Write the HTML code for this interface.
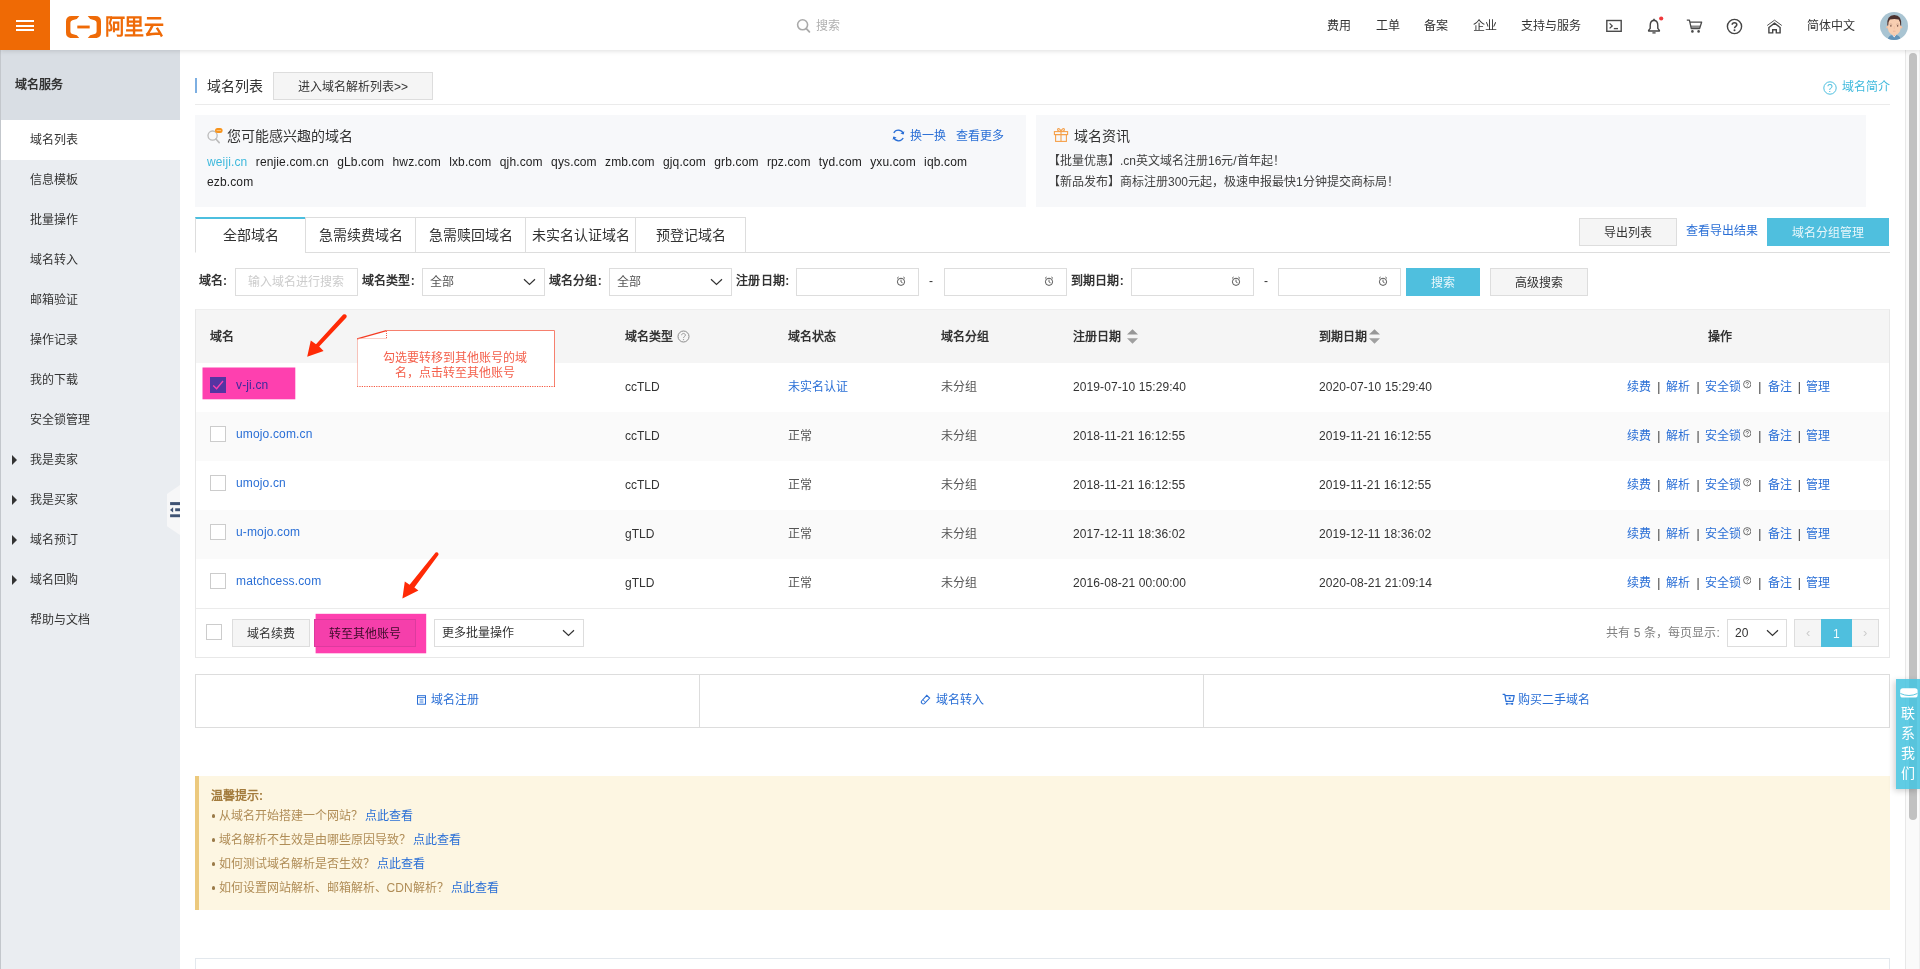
<!DOCTYPE html>
<html lang="zh-CN">
<head>
<meta charset="utf-8">
<title>域名列表</title>
<style>
*{box-sizing:border-box;margin:0;padding:0}
html,body{width:1920px;height:969px;overflow:hidden;background:#fff}
body{will-change:transform;font-family:"Liberation Sans",sans-serif;font-size:12px;color:#333;position:relative}
a{text-decoration:none;color:#2a6fd6}
.abs{position:absolute}
.t{position:absolute;white-space:nowrap;line-height:20px;height:20px}
.b{font-weight:bold}
/* header */
#hd{position:absolute;left:0;top:0;width:1920px;height:50px;background:#fff;box-shadow:0 1px 5px rgba(0,0,0,.13);z-index:20}
#burger{position:absolute;left:0;top:0;width:50px;height:50px;background:#ef6a05}
#burger i{position:absolute;left:16px;width:18px;height:2px;background:#fff}
.nav{position:absolute;top:15.5px;height:20px;line-height:20px;font-size:12px;color:#333;white-space:nowrap}
/* sidebar */
#sb{position:absolute;left:0;top:50px;width:180px;height:919px;background:#eaedf1;border-left:1px solid #c3c7cc}
#sbt{position:absolute;left:0;top:0;width:179px;height:70px;background:#d9dee4}
.si{position:absolute;left:0;width:179px;height:40px;line-height:40px;padding-left:29px;font-size:12px;color:#333}
.si.on{background:#fff}
.si .ar{position:absolute;left:11px;top:15px;width:0;height:0;border-left:5px solid #333;border-top:5px solid transparent;border-bottom:5px solid transparent}
/* common widgets */
.btn{position:absolute;height:28px;line-height:28px;border:1px solid #ddd;background:#f5f5f5;color:#333;text-align:center;font-size:12px;white-space:nowrap}
.btn.pri{background:#4fbfde;border-color:#4fbfde;color:rgba(255,255,255,.88)}
.inp{position:absolute;height:28px;border:1px solid #ddd;background:#fff;line-height:26px;font-size:12px;color:#555;white-space:nowrap}
.cb{position:absolute;width:16px;height:16px;border:1px solid #ccc;background:#fff}

/* main */
.pan{position:absolute;top:115px;height:91.5px;background:#f7f8fa}
.dl{position:absolute;left:12px;top:37px;width:800px;line-height:20px;font-size:12px;color:#222;letter-spacing:.135px}
.dl span{display:inline-block;margin-right:8.33px}
.tab{position:absolute;top:217px;height:36px;width:111px;border:1px solid #ddd;background:#fff;font-size:14px;line-height:35px;text-align:center;color:#333}
.tab.on{border-top:2px solid #4cbfdf;border-bottom:1px solid #fff;line-height:33px}
.lb{position:absolute;top:271px;height:20px;line-height:20px;font-weight:bold;font-size:12px;color:#333;white-space:nowrap;letter-spacing:.3px;margin-left:-.5px}
.chev{position:absolute;top:9px;width:13px;height:8px}
.clk{position:absolute;top:6.6px;width:10px;height:11px}

/* table */
#tb{position:absolute;left:195px;top:309px;width:1695px;height:349px;border:1px solid #e8e8e8;border-top-color:#eee}
.th{position:absolute;top:17px;height:20px;line-height:20px;font-weight:bold;font-size:12px;color:#333;white-space:nowrap}
.row{position:absolute;left:0;width:1693px;height:49px}
.row.g{background:#fafafa}
.row div,.row a{position:absolute;top:14px;height:20px;line-height:20px;white-space:nowrap;font-size:12px}
.row .c1{left:429px;color:#333}.row .c2{left:592px;color:#555}.row .c3{left:745px;color:#555}.row .c4{left:877px;color:#333;letter-spacing:.09px}.row .c5{left:1123px;color:#333;letter-spacing:.09px}
.row .dn{left:40px;top:12px;letter-spacing:.15px}
.row .cb{left:14px;top:14px;height:16px}
.row .op{left:1431.2px;color:#333}
.op a{position:static}
.op i{font-style:normal;display:inline-block;width:14.3px;text-align:center;color:#333}
.op svg{position:relative;top:-2.5px;margin-left:1.5px;margin-right:0}
.srt{position:absolute;top:18.5px;width:11px;height:15px}

/* bottom */
.tip{position:absolute;left:16px;height:20px;line-height:20px;white-space:nowrap;color:#b08d57;font-size:12px}
.tip a{margin-left:2.8px}
.tip u{display:inline-block;width:3.4px;height:3.4px;border-radius:50%;background:#9a7a48;vertical-align:middle;margin:-2px 3.6px 0 .6px}
</style>
</head>
<body>
<!-- HEADER -->
<div id="hd">
  <div id="burger"><i style="top:20px"></i><i style="top:24.5px"></i><i style="top:29px"></i></div>
  <svg class="abs" style="left:66px;top:15.7px" width="35" height="22.1" viewBox="0 0 35 22.4" preserveAspectRatio="none">
    <path d="M13.3 0 H5.6 Q0 0 0 5.6 V16.8 Q0 22.4 5.6 22.4 H13.3 L10.8 19.4 L6.4 18.2 Q4.4 17.6 4.4 15.6 V6.8 Q4.4 4.8 6.4 4.2 L10.8 3 Z" fill="#ef6a07"/>
    <path d="M21.7 0 H29.4 Q35 0 35 5.6 V16.8 Q35 22.4 29.4 22.4 H21.7 L24.2 19.4 L28.6 18.2 Q30.6 17.6 30.6 15.6 V6.8 Q30.6 4.8 28.6 4.2 L24.2 3 Z" fill="#ef6a07"/>
    <rect x="11.3" y="9.7" width="12.4" height="2.9" fill="#ef6a07"/>
  </svg>
  <div class="abs b" style="left:105px;top:13.5px;font-size:20px;line-height:26px;height:26px;color:#ef6a07;letter-spacing:-.55px;white-space:nowrap;transform:scaleY(1.06);transform-origin:50% 50%">阿里云</div>
  <!-- search -->
  <svg class="abs" style="left:796px;top:18px" width="16" height="16" viewBox="0 0 16 16"><circle cx="6.6" cy="6.8" r="5" fill="none" stroke="#aaa" stroke-width="1.6"/><path d="M10.3 10.6 L13.4 13.8" stroke="#aaa" stroke-width="1.8" stroke-linecap="round"/></svg>
  <div class="nav" style="left:816px;color:#b0b0b0">搜索</div>
  <div class="nav" style="left:1327px">费用</div>
  <div class="nav" style="left:1375.5px">工单</div>
  <div class="nav" style="left:1424px">备案</div>
  <div class="nav" style="left:1472.5px">企业</div>
  <div class="nav" style="left:1521px">支持与服务</div>
  <!-- terminal -->
  <svg class="abs" style="left:1606px;top:19px" width="16" height="14" viewBox="0 0 16 14"><rect x=".8" y="1.5" width="14.4" height="10.8" fill="none" stroke="#4a4a4a" stroke-width="1.4"/><path d="M3.6 4.4 L6.2 6.9 L3.6 9.4" fill="none" stroke="#4a4a4a" stroke-width="1.3"/><path d="M7.8 9.6 H12" stroke="#4a4a4a" stroke-width="1.3"/></svg>
  <!-- bell -->
  <svg class="abs" style="left:1646px;top:16.6px;overflow:visible" width="18" height="18" viewBox="0 0 18 18"><path d="M8 3.2 C5.2 3.6 4.2 6 4.2 8.4 V11.4 L2.6 13.4 V14 H13.4 V13.4 L11.8 11.4 V8.4 C11.8 6 10.8 3.6 8 3.2 Z" fill="none" stroke="#444" stroke-width="1.4" stroke-linejoin="round"/><path d="M8 1.8 V3" stroke="#444" stroke-width="1.5"/><path d="M6.4 15.9 H9.6" fill="none" stroke="#444" stroke-width="1.3"/><circle cx="15.2" cy="1.5" r="2.1" fill="#f0383c"/></svg>
  <!-- cart -->
  <svg class="abs" style="left:1686px;top:19px" width="17" height="15" viewBox="0 0 17 15"><path d="M4.6 6.4 H14.6 L13.6 9.6 H5.4 Z" fill="#8a8a8a"/><path d="M.8 1.2 H3.4 L5.3 9.6 H13.6 L15.6 3.2 H4" fill="none" stroke="#4a4a4a" stroke-width="1.3" stroke-linejoin="round"/><circle cx="6.4" cy="12.4" r="1.3" fill="#4a4a4a"/><circle cx="12.6" cy="12.4" r="1.3" fill="#4a4a4a"/></svg>
  <!-- help -->
  <svg class="abs" style="left:1726px;top:17.5px" width="17" height="17" viewBox="0 0 17 17"><circle cx="8.5" cy="8.5" r="7.1" fill="none" stroke="#444" stroke-width="1.4"/><path d="M6.2 6.8 C6.2 4 10.8 4 10.8 6.8 C10.8 8.4 8.5 8.4 8.5 10.2" fill="none" stroke="#444" stroke-width="1.5"/><circle cx="8.5" cy="12.3" r="1" fill="#444"/></svg>
  <!-- home -->
  <svg class="abs" style="left:1766px;top:18.5px" width="17" height="15" viewBox="0 0 17 15"><path d="M1.2 6.5 L8.5 1.2 L15.8 6.5" fill="none" stroke="#555" stroke-width="1" stroke-linejoin="miter"/><path d="M2.9 8.5 L8.5 4.2 L14.1 8.5 V13.9 H10.3 V10.8 H6.7 V13.9 H2.9 Z" fill="none" stroke="#444" stroke-width="1.4" stroke-linejoin="miter"/></svg>
  <div class="nav" style="left:1807px">简体中文</div>
  <!-- avatar -->
  <svg class="abs" style="left:1880px;top:12px" width="28" height="28" viewBox="0 0 28 28"><defs><clipPath id="av"><circle cx="14" cy="14" r="14"/></clipPath></defs><g clip-path="url(#av)"><rect width="28" height="28" fill="#a9c4d2"/><path d="M7.6 28 Q8.4 23.4 12.2 23 L14.2 24.6 L16.2 23 Q20 23.4 20.8 28 Z" fill="#6393b8"/><path d="M12.4 23 L14.2 25.4 L16 23 V21 H12.4 Z" fill="#fff"/><path d="M12.6 20.5 H15.9 V22.6 L14.2 24.4 L12.6 22.6 Z" fill="#f0a78c"/><circle cx="7.5" cy="15.3" r="1.2" fill="#f3c0a2"/><circle cx="21" cy="15.3" r="1.2" fill="#f3c0a2"/><path d="M7.9 10.5 Q7.9 5.4 14.25 5.4 Q20.6 5.4 20.6 10.5 V15.5 Q20.6 19.6 17.6 22 Q14.25 24.4 10.9 22 Q7.9 19.6 7.9 15.5 Z" fill="#f8ceb1"/><path d="M7.3 13.6 Q6.4 3.2 14.25 3.1 Q22.1 3.2 21.2 13.6 L20.3 13.4 Q20.4 9.4 18.6 7.4 Q14.25 6.4 9.9 7.4 Q8.1 9.4 8.2 13.4 Z" fill="#4d322f"/><ellipse cx="10.9" cy="13.8" rx=".75" ry=".9" fill="#7a5548"/><ellipse cx="17.6" cy="13.8" rx=".75" ry=".9" fill="#7a5548"/><path d="M9.6 12.3 Q10.9 11.7 12.2 12.4 M16.3 12.4 Q17.6 11.7 18.9 12.3" stroke="#b08a78" stroke-width=".5" fill="none"/><path d="M14.25 14 V17" stroke="#eab596" stroke-width=".5"/><path d="M13 19.2 H15.5" stroke="#e3a58c" stroke-width=".6"/></g></svg>
</div>

<!-- SIDEBAR -->
<div id="sb">
  <div id="sbt"><div class="t b" style="left:14px;top:25px;font-size:12px">域名服务</div></div>
  <div class="si on" style="top:70px">域名列表</div>
  <div class="si" style="top:110px">信息模板</div>
  <div class="si" style="top:150px">批量操作</div>
  <div class="si" style="top:190px">域名转入</div>
  <div class="si" style="top:230px">邮箱验证</div>
  <div class="si" style="top:270px">操作记录</div>
  <div class="si" style="top:310px">我的下载</div>
  <div class="si" style="top:350px">安全锁管理</div>
  <div class="si" style="top:390px"><span class="ar"></span>我是卖家</div>
  <div class="si" style="top:430px"><span class="ar"></span>我是买家</div>
  <div class="si" style="top:470px"><span class="ar"></span>域名预订</div>
  <div class="si" style="top:510px"><span class="ar"></span>域名回购</div>
  <div class="si" style="top:550px">帮助与文档</div>
  <!-- collapse handle -->
  <svg class="abs" style="left:166px;top:434.9px" width="13" height="50" viewBox="0 0 13 50"><path d="M13 0 L0 9.1 V41.3 L13 50 Z" fill="#f7f7f8"/><rect x="3.1" y="17.1" width="9.9" height="3" fill="#3f5374"/><rect x="8.2" y="23.3" width="4.8" height="2.9" fill="#3f5374"/><rect x="3.1" y="29.3" width="9.9" height="2.9" fill="#3f5374"/><path d="M3 24.9 L6.1 22.3 V27.6 Z" fill="#3f5374"/></svg>
</div>


<!-- TITLE ROW -->
<div class="abs" style="left:195px;top:78px;width:2px;height:15px;background:#7dafe2"></div>
<div class="t" style="left:207px;top:76px;font-size:14px;color:#333">域名列表</div>
<div class="btn" style="left:273px;top:72px;width:160px">进入域名解析列表&gt;&gt;</div>
<div class="abs" style="left:195px;top:104px;width:1695px;height:1px;background:#ebebeb"></div>
<svg class="abs" style="left:1823px;top:81px" width="14" height="14" viewBox="0 0 14 14"><circle cx="7" cy="7" r="6.2" fill="none" stroke="#4cbfdf" stroke-width="1"/><text x="7" y="10.8" font-size="10.5" text-anchor="middle" fill="#4cbfdf" font-family="Liberation Sans, sans-serif">?</text></svg>
<div class="t" style="left:1842px;top:77px;color:#3fb9dc">域名简介</div>

<!-- PANELS -->
<div class="pan" style="left:195px;width:831px">
  <svg class="abs" style="left:11px;top:12px" width="17" height="17" viewBox="0 0 17 17"><circle cx="6.6" cy="8.6" r="4.6" fill="none" stroke="#bbb" stroke-width="1.3"/><path d="M9.9 12 L13.2 15.6" stroke="#bbb" stroke-width="1.6" stroke-linecap="round"/><rect x="9" y="1" width="7.6" height="5" rx="2.5" fill="#f7941d"/><rect x="10.6" y="3.1" width="4.4" height=".7" fill="#fdd3a0"/></svg>
  <div class="t" style="left:32px;top:11px;font-size:14px;color:#333">您可能感兴趣的域名</div>
  <svg class="abs" style="left:697px;top:14px" width="13" height="13" viewBox="0 0 13 13"><path d="M11.4 5 A5.2 5.2 0 0 0 1.8 4" fill="none" stroke="#2a6fd6" stroke-width="1.3"/><path d="M1.6 8 A5.2 5.2 0 0 0 11.2 9" fill="none" stroke="#2a6fd6" stroke-width="1.3"/><path d="M12.4 2.2 L11.6 5.6 L8.4 4.6 Z" fill="#2a6fd6"/><path d="M.6 10.8 L1.4 7.4 L4.6 8.4 Z" fill="#2a6fd6"/></svg>
  <div class="t" style="left:715px;top:11px"><a>换一换</a></div>
  <div class="t" style="left:760.5px;top:11px"><a>查看更多</a></div>
  <div class="dl"><span style="color:#3fb9dc">weiji.cn</span><span>renjie.com.cn</span><span>gLb.com</span><span>hwz.com</span><span>lxb.com</span><span>qjh.com</span><span>qys.com</span><span>zmb.com</span><span>gjq.com</span><span>grb.com</span><span>rpz.com</span><span>tyd.com</span><span>yxu.com</span><span>iqb.com</span><span>ezb.com</span></div>
</div>
<div class="pan" style="left:1036px;width:830px">
  <svg class="abs" style="left:17px;top:12px" width="16" height="16" viewBox="0 0 16 16"><rect x="1.4" y="4.6" width="13.2" height="3" fill="none" stroke="#f5a04a" stroke-width="1.1"/><rect x="2.6" y="7.6" width="10.8" height="6.8" fill="none" stroke="#f5a04a" stroke-width="1.1"/><path d="M8 4.6 V14.4" stroke="#f5a04a" stroke-width="1.1"/><path d="M8 4.4 C6 4.4 4 3.6 4.6 2.2 C5.4 .8 7.6 2.4 8 4.4 C8.4 2.4 10.6 .8 11.4 2.2 C12 3.6 10 4.4 8 4.4 Z" fill="none" stroke="#f5a04a" stroke-width="1.1"/></svg>
  <div class="t" style="left:37.5px;top:11px;font-size:14px;color:#333">域名资讯</div>
  <div class="t" style="left:12px;top:35.5px;color:#404040">【批量优惠】.cn英文域名注册16元/首年起！</div>
  <div class="t" style="left:12px;top:56.5px;color:#404040">【新品发布】商标注册300元起，极速申报最快1分钟提交商标局！</div>
</div>

<!-- TABS -->
<div class="abs" style="left:195px;top:252px;width:1695px;height:1px;background:#ddd"></div>
<div class="tab on" style="left:195px">全部域名</div>
<div class="tab" style="left:305px">急需续费域名</div>
<div class="tab" style="left:415px">急需赎回域名</div>
<div class="tab" style="left:525px">未实名认证域名</div>
<div class="tab" style="left:635px">预登记域名</div>
<div class="btn" style="left:1579px;top:218px;width:98px">导出列表</div>
<div class="t" style="left:1686px;top:221px"><a>查看导出结果</a></div>
<div class="btn pri" style="left:1767px;top:218px;width:122px">域名分组管理</div>

<!-- FILTER -->
<div class="lb" style="left:199px">域名:</div>
<div class="inp" style="left:235px;top:268px;width:123px;padding-left:12px;color:#ccc">输入域名进行搜索</div>
<div class="lb" style="left:362px">域名类型:</div>
<div class="inp" style="left:422px;top:268px;width:123px;padding-left:7px">全部<svg class="chev" style="right:8px" viewBox="0 0 13 8"><path d="M1 1.2 L6.5 6.4 L12 1.2" fill="none" stroke="#333" stroke-width="1.2"/></svg></div>
<div class="lb" style="left:549px">域名分组:</div>
<div class="inp" style="left:609px;top:268px;width:123px;padding-left:7px">全部<svg class="chev" style="right:8px" viewBox="0 0 13 8"><path d="M1 1.2 L6.5 6.4 L12 1.2" fill="none" stroke="#333" stroke-width="1.2"/></svg></div>
<div class="lb" style="left:736.5px">注册日期:</div>
<div class="inp" style="left:796px;top:268px;width:123px"><svg class="clk" style="left:99px" viewBox="0 0 10 11"><circle cx="5" cy="5.8" r="3.6" fill="none" stroke="#444" stroke-width=".9"/><path d="M5 3.6 V6 L6.6 6.8" fill="none" stroke="#444" stroke-width=".8"/><path d="M1 2.4 L2.6 1 M9 2.4 L7.4 1" stroke="#444" stroke-width=".9"/></svg></div>
<div class="t" style="left:929px;top:271px">-</div>
<div class="inp" style="left:944px;top:268px;width:123px"><svg class="clk" style="left:99px" viewBox="0 0 10 11"><circle cx="5" cy="5.8" r="3.6" fill="none" stroke="#444" stroke-width=".9"/><path d="M5 3.6 V6 L6.6 6.8" fill="none" stroke="#444" stroke-width=".8"/><path d="M1 2.4 L2.6 1 M9 2.4 L7.4 1" stroke="#444" stroke-width=".9"/></svg></div>
<div class="lb" style="left:1071px">到期日期:</div>
<div class="inp" style="left:1131px;top:268px;width:123px"><svg class="clk" style="left:99px" viewBox="0 0 10 11"><circle cx="5" cy="5.8" r="3.6" fill="none" stroke="#444" stroke-width=".9"/><path d="M5 3.6 V6 L6.6 6.8" fill="none" stroke="#444" stroke-width=".8"/><path d="M1 2.4 L2.6 1 M9 2.4 L7.4 1" stroke="#444" stroke-width=".9"/></svg></div>
<div class="t" style="left:1264px;top:271px">-</div>
<div class="inp" style="left:1278px;top:268px;width:123px"><svg class="clk" style="left:99px" viewBox="0 0 10 11"><circle cx="5" cy="5.8" r="3.6" fill="none" stroke="#444" stroke-width=".9"/><path d="M5 3.6 V6 L6.6 6.8" fill="none" stroke="#444" stroke-width=".8"/><path d="M1 2.4 L2.6 1 M9 2.4 L7.4 1" stroke="#444" stroke-width=".9"/></svg></div>
<div class="btn pri" style="left:1406px;top:268px;width:74px">搜索</div>
<div class="btn" style="left:1490px;top:268px;width:98px">高级搜索</div>
<div id="tb">
<div class="abs" style="left:0;top:0;width:1693px;height:53px;background:#f5f5f5"></div>
<div class="th" style="left:14px">域名</div>
<div class="th" style="left:429px">域名类型</div>
<div class="th" style="left:592px">域名状态</div>
<div class="th" style="left:745px">域名分组</div>
<div class="th" style="left:877px">注册日期</div>
<div class="th" style="left:1123px">到期日期</div>
<div class="th" style="left:1511.5px">操作</div>
<svg class="abs" style="left:480.5px;top:20px" width="13" height="13" viewBox="0 0 13 13"><circle cx="6.5" cy="6.5" r="5.5" fill="none" stroke="#8a8a8a" stroke-width="1"/><path d="M4.6 5.2 C4.6 2.9 8.4 2.9 8.4 5.2 C8.4 6.5 6.5 6.5 6.5 8" fill="none" stroke="#999" stroke-width="1"/><circle cx="6.5" cy="9.6" r=".7" fill="#999"/></svg>
<svg class="srt" style="left:930.5px" viewBox="0 0 11 15"><path d="M5.5 .2 L11 5.6 H0 Z" fill="#979797"/><path d="M5.5 14.7 L11 9.3 H0 Z" fill="#a0a0a0"/></svg>
<svg class="srt" style="left:1173.2px" viewBox="0 0 11 15"><path d="M5.5 .2 L11 5.6 H0 Z" fill="#979797"/><path d="M5.5 14.7 L11 9.3 H0 Z" fill="#a0a0a0"/></svg>
<div class="row" style="top:53px"><svg class="abs" style="left:0;top:0" width="110" height="49"><rect x="6.5" y="4.5" width="92.8" height="31.8" fill="#fe40af"/></svg><div class="cb" style="background:#5534a2;border-color:#5534a2"><svg style="position:absolute;left:-1px;top:-1px" width="16" height="16" viewBox="0 0 16 16"><path d="M3.2 8.4 L6.6 11.8 L13 4" fill="none" stroke="#fe40af" stroke-width="1.4"/></svg></div><a class="dn" style="color:#3b2a9c">v-ji.cn</a><div class="c1">ccTLD</div><a class="c2" style="color:#2a6fd6">未实名认证</a><div class="c3">未分组</div><div class="c4">2019-07-10 15:29:40</div><div class="c5">2020-07-10 15:29:40</div><div class="op"><a>续费</a><i style="width:15.3px">|</i><a>解析</a><i style="width:15px">|</i><a>安全锁</a><svg width="8.5" height="8.5" viewBox="0 0 9 9"><circle cx="4.5" cy="4.5" r="3.9" fill="none" stroke="#444" stroke-width=".8"/><path d="M3.2 3.7 C3.2 2.1 5.8 2.1 5.8 3.7 C5.8 4.6 4.5 4.5 4.5 5.5" fill="none" stroke="#444" stroke-width=".8"/><circle cx="4.5" cy="6.7" r=".5" fill="#444"/></svg><i style="width:16.7px">|</i><a>备注</a><i>|</i><a>管理</a></div></div>
<div class="row g" style="top:102px"><div class="cb"></div><a class="dn">umojo.com.cn</a><div class="c1">ccTLD</div><div class="c2">正常</div><div class="c3">未分组</div><div class="c4">2018-11-21 16:12:55</div><div class="c5">2019-11-21 16:12:55</div><div class="op"><a>续费</a><i style="width:15.3px">|</i><a>解析</a><i style="width:15px">|</i><a>安全锁</a><svg width="8.5" height="8.5" viewBox="0 0 9 9"><circle cx="4.5" cy="4.5" r="3.9" fill="none" stroke="#444" stroke-width=".8"/><path d="M3.2 3.7 C3.2 2.1 5.8 2.1 5.8 3.7 C5.8 4.6 4.5 4.5 4.5 5.5" fill="none" stroke="#444" stroke-width=".8"/><circle cx="4.5" cy="6.7" r=".5" fill="#444"/></svg><i style="width:16.7px">|</i><a>备注</a><i>|</i><a>管理</a></div></div>
<div class="row" style="top:151px"><div class="cb"></div><a class="dn">umojo.cn</a><div class="c1">ccTLD</div><div class="c2">正常</div><div class="c3">未分组</div><div class="c4">2018-11-21 16:12:55</div><div class="c5">2019-11-21 16:12:55</div><div class="op"><a>续费</a><i style="width:15.3px">|</i><a>解析</a><i style="width:15px">|</i><a>安全锁</a><svg width="8.5" height="8.5" viewBox="0 0 9 9"><circle cx="4.5" cy="4.5" r="3.9" fill="none" stroke="#444" stroke-width=".8"/><path d="M3.2 3.7 C3.2 2.1 5.8 2.1 5.8 3.7 C5.8 4.6 4.5 4.5 4.5 5.5" fill="none" stroke="#444" stroke-width=".8"/><circle cx="4.5" cy="6.7" r=".5" fill="#444"/></svg><i style="width:16.7px">|</i><a>备注</a><i>|</i><a>管理</a></div></div>
<div class="row g" style="top:200px"><div class="cb"></div><a class="dn">u-mojo.com</a><div class="c1">gTLD</div><div class="c2">正常</div><div class="c3">未分组</div><div class="c4">2017-12-11 18:36:02</div><div class="c5">2019-12-11 18:36:02</div><div class="op"><a>续费</a><i style="width:15.3px">|</i><a>解析</a><i style="width:15px">|</i><a>安全锁</a><svg width="8.5" height="8.5" viewBox="0 0 9 9"><circle cx="4.5" cy="4.5" r="3.9" fill="none" stroke="#444" stroke-width=".8"/><path d="M3.2 3.7 C3.2 2.1 5.8 2.1 5.8 3.7 C5.8 4.6 4.5 4.5 4.5 5.5" fill="none" stroke="#444" stroke-width=".8"/><circle cx="4.5" cy="6.7" r=".5" fill="#444"/></svg><i style="width:16.7px">|</i><a>备注</a><i>|</i><a>管理</a></div></div>
<div class="row" style="top:249px"><div class="cb"></div><a class="dn">matchcess.com</a><div class="c1">gTLD</div><div class="c2">正常</div><div class="c3">未分组</div><div class="c4">2016-08-21 00:00:00</div><div class="c5">2020-08-21 21:09:14</div><div class="op"><a>续费</a><i style="width:15.3px">|</i><a>解析</a><i style="width:15px">|</i><a>安全锁</a><svg width="8.5" height="8.5" viewBox="0 0 9 9"><circle cx="4.5" cy="4.5" r="3.9" fill="none" stroke="#444" stroke-width=".8"/><path d="M3.2 3.7 C3.2 2.1 5.8 2.1 5.8 3.7 C5.8 4.6 4.5 4.5 4.5 5.5" fill="none" stroke="#444" stroke-width=".8"/><circle cx="4.5" cy="6.7" r=".5" fill="#444"/></svg><i style="width:16.7px">|</i><a>备注</a><i>|</i><a>管理</a></div></div>
<div class="abs" style="left:0;top:297.5px;width:1693px;height:1px;background:#ebebeb"></div>
<div class="cb" style="left:10px;top:314px"></div>
<div class="btn" style="left:36px;top:309px;width:78px">域名续费</div>
<svg class="abs" style="left:110px;top:298px" width="130" height="50"><rect x="9.6" y="5.8" width="110.6" height="39.5" fill="#fe40af"/></svg>
<div class="btn" style="left:118px;top:309px;width:102px;background:#f53fab;border-color:#dd3a9e;color:#3a0c28">转至其他账号</div>
<div class="inp" style="left:238px;top:309px;width:150px;padding-left:7px;color:#333">更多批量操作<svg class="chev" style="right:8px" viewBox="0 0 13 8"><path d="M1 1.2 L6.5 6.4 L12 1.2" fill="none" stroke="#333" stroke-width="1.2"/></svg></div>
<div class="t" style="left:1410px;top:313px;color:#808080;letter-spacing:.1px">共有 5 条，每页显示:</div>
<div class="inp" style="left:1531px;top:309px;width:60px;padding-left:7px;color:#333">20<svg class="chev" style="right:7px" viewBox="0 0 13 8"><path d="M1 1.2 L6.5 6.4 L12 1.2" fill="none" stroke="#333" stroke-width="1.2"/></svg></div>
<div class="btn" style="left:1598px;top:309px;width:85px"></div>
<div class="abs" style="left:1624.6px;top:309px;width:31.4px;height:28px;background:#4fbfde;color:rgba(255,255,255,.92);text-align:center;line-height:30px">1</div>
<div class="t" style="left:1610px;top:313px;color:#ccc;font-size:13px">‹</div>
<div class="t" style="left:1667px;top:313px;color:#ccc;font-size:13px">›</div>
</div>
<!-- ANNOTATIONS -->
<svg class="abs" style="left:300px;top:308px;z-index:5" width="270" height="90" viewBox="300 308 270 90">
  <path d="M357.5 338.5 L386.5 330.5 H554.5 V386.5 H357.5 Z" fill="#fff"/>
  <path d="M386.5 330.5 H554.5 V386.5" fill="none" stroke="#f6806e" stroke-width="1"/>
  <path d="M555 386.5 H357" fill="none" stroke="#f4563f" stroke-width="1" stroke-dasharray="1.2 1.2"/>
  <path d="M357.5 386.5 V339" fill="none" stroke="#f58a79" stroke-width="1" stroke-dasharray="1 1"/>
  <path d="M357.2 338.8 L386.5 330.6" fill="none" stroke="#f43c24" stroke-width="1.4"/>
  <path d="M386.5 331 V338.5" fill="none" stroke="#f4604c" stroke-width="1" stroke-dasharray="1 1"/>
  <path d="M386.5 338.5 H358" fill="none" stroke="#f8a395" stroke-width="1" stroke-dasharray="1 1"/>
  <path d="M343.2 314.6 Q345.4 313.6 346.6 315.6 Q347 316.8 346.2 317.8 L319.2 346.6 L323.6 351 L307.2 356.8 L310.8 340.6 L316 344.2 Z" fill="#ff2a06"/>
</svg>
<div class="abs" style="left:356.3px;top:351px;width:198px;text-align:center;line-height:15px;font-size:12px;color:#f4604c;z-index:6">勾选要转移到其他账号的域<br>名，点击转至其他账号</div>
<svg class="abs" style="left:395px;top:545.6px;z-index:5" width="50" height="60" viewBox="395 545 50 60">
  <path d="M435.6 551.6 Q437.4 550.8 438.4 552.4 Q438.8 553.4 438.2 554.2 L414.4 586.6 L418.4 589.6 L402.4 597.6 L404.8 580.4 L409.6 583.8 Z" fill="#ff2a06"/>
</svg>
<!-- ACTION BOXES -->
<div class="abs" style="left:195px;top:674px;width:1695px;height:54px;border:1px solid #ddd"></div>
<div class="abs" style="left:699px;top:674px;width:1px;height:54px;background:#ddd"></div>
<div class="abs" style="left:1203px;top:674px;width:1px;height:54px;background:#ddd"></div>
<svg class="abs" style="left:417px;top:695px" width="9" height="10" viewBox="0 0 9 10"><rect x=".5" y=".7" width="8" height="8.5" fill="none" stroke="#2a6fd6" stroke-width="1"/><path d="M.5 2.6 H8.5" stroke="#2a6fd6" stroke-width=".9"/><path d="M2.6 4.9 H6.4 M2.6 7 H6.4" stroke="#2a6fd6" stroke-width=".9"/></svg>
<div class="t" style="left:431px;top:689.5px"><a>域名注册</a></div>
<svg class="abs" style="left:920px;top:694px" width="11" height="11" viewBox="0 0 11 11"><path d="M1.6 7 L6.8 1.4 L9.6 4 L4.4 9.6 Q3.2 10.4 2 9.4 Q.8 8.2 1.6 7 Z" fill="none" stroke="#2a6fd6" stroke-width="1.1"/><path d="M2.9 5.7 L5.6 8.3" stroke="#2a6fd6" stroke-width=".9"/></svg>
<div class="t" style="left:935.5px;top:689.5px"><a>域名转入</a></div>
<svg class="abs" style="left:1502px;top:693px" width="14" height="13" viewBox="0 0 14 13"><path d="M.6 1.4 H2.8 L4 8.4 H11 L12.2 2.6 H3.4" fill="none" stroke="#2a6fd6" stroke-width="1.2" stroke-linejoin="round"/><rect x="6.7" y="4.3" width="2" height="2" fill="#2a6fd6"/><path d="M4.4 10.8 H10.6" stroke="#2a6fd6" stroke-width=".9"/><circle cx="4.8" cy="10.8" r="1.1" fill="#2a6fd6"/><circle cx="10.2" cy="10.8" r="1.1" fill="#2a6fd6"/></svg>
<div class="t" style="left:1518px;top:689.5px"><a>购买二手域名</a></div>

<!-- TIPS -->
<div class="abs" style="left:195px;top:776px;width:1695px;height:134px;background:#fdf6e2;border-left:4px solid #ecc97d">
  <div class="tip b" style="left:12px;top:9.5px;color:#a37b3c">温馨提示:</div>
  <div class="tip" style="left:12px;top:30px"><u></u>从域名开始搭建一个网站？<a>点此查看</a></div>
  <div class="tip" style="left:12px;top:54px"><u></u>域名解析不生效是由哪些原因导致？<a>点此查看</a></div>
  <div class="tip" style="left:12px;top:78px"><u></u>如何测试域名解析是否生效？<a>点此查看</a></div>
  <div class="tip" style="left:12px;top:102px"><u></u>如何设置网站解析、邮箱解析、CDN解析？<a>点此查看</a></div>
</div>

<!-- NEXT BOX -->
<div class="abs" style="left:195px;top:958px;width:1695px;height:30px;border:1px solid #e3e8ed"></div>

<!-- CONTACT -->
<div class="abs" style="left:1896px;top:679px;width:24px;height:110px;background:rgba(72,196,224,.87);box-shadow:-2px 2px 6px rgba(0,0,0,.18);z-index:15;color:#fff;font-size:14px;line-height:20px;text-align:center">
  <svg class="abs" style="left:3.6px;top:9px" width="18" height="10" viewBox="0 0 18 10"><rect x=".2" y=".2" width="17.4" height="9.3" rx="2.6" fill="#fff"/><path d="M.4 5.5 Q9 9.5 17.4 5.5" fill="none" stroke="#5cc8e1" stroke-width="1"/></svg>
  <div style="position:absolute;left:5px;top:24px;width:14px">联<br>系<br>我<br>们</div>
</div>

<!-- SCROLLBAR -->
<div class="abs" style="left:1905px;top:50px;width:15px;height:919px;background:#fafafa;border-left:1px solid #e8e8e8;border-right:1px solid #efefef;z-index:10"></div>
<div class="abs" style="left:1909px;top:53px;width:8px;height:767px;border-radius:4px;background:#c1c1c1;z-index:11"></div>



</body>
</html>
